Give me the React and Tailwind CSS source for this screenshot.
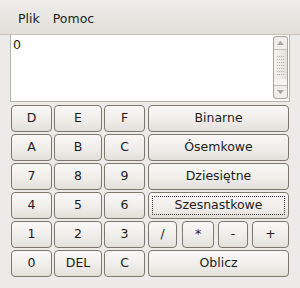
import React from "react";

const F = { fontFamily: '"DejaVu Sans", sans-serif' };

function Btn({ children, className = "", focus = false }) {
  return (
    <div
      className={
        "relative flex h-[27px] items-center justify-center rounded-[4px] border border-[#7d776d] bg-gradient-to-b from-[#f9f8f7] via-[#f1efec] to-[#e3e0db] text-[12.5px] text-[#1c1c1c] " +
        className
      }
    >
      {focus && (
        <div className="pointer-events-none absolute inset-[3px] border border-dotted border-[#3a3a3a]" />
      )}
      <span className="relative">{children}</span>
    </div>
  );
}

function Scrollbar() {
  return (
    <div className="flex h-[63px] w-[15px] flex-col rounded-[3px] border border-[#aaa39a] bg-[#efeeec]">
      <div className="flex h-[13px] items-center justify-center border-b border-[#c5beb5]">
        <svg width="7" height="4" viewBox="0 0 7 4">
          <polygon points="0,4 7,4 3.5,0" fill="#a9a39b" />
        </svg>
      </div>
      <div className="flex flex-1 flex-col border-b border-[#c5beb5] bg-gradient-to-r from-[#f4f3f1] to-[#e4e1dc]">
        <div className="flex flex-1 items-center justify-center">
          <svg width="9" height="20" viewBox="0 0 9 20">
            {[0, 1, 2, 3, 4, 5, 6].map((r) =>
              [0, 1, 2, 3].map((c) => (
                <rect key={r + "-" + c} x={c * 2 + 1} y={r * 3 + 1} width="1" height="1" fill="#b7b0a6" />
              ))
            )}
          </svg>
        </div>
        <div className="h-[6px] bg-[#f7f6f4]" />
      </div>
      <div className="flex h-[12px] items-center justify-center">
        <svg width="7" height="4" viewBox="0 0 7 4">
          <polygon points="0,0 7,0 3.5,4" fill="#a9a39b" />
        </svg>
      </div>
    </div>
  );
}

export default function App() {
  return (
    <div className="h-[288px] w-[300px] bg-[#edebe9]" style={F}>
      <div className="flex h-[35px] items-end gap-[13px] border-b border-[#c8c1b8] bg-gradient-to-b from-[#eeedeb] to-[#e2ded9] pb-[5px] pl-[18px] text-[12.5px] text-[#1c1c1c]">
        <span>Plik</span>
        <span>Pomoc</span>
      </div>
      <div className="px-[10px] pt-0">
        <div className="flex h-[67px] border border-[#b9b2a9] border-t-0 bg-white">
          <div className="flex-1 pl-[2px] pt-[2px] text-[12.5px] leading-[15px] text-[#1c1c1c]">0</div>
          <div className="pr-[1px] pt-[1px]">
            <Scrollbar />
          </div>
        </div>
      </div>
      <div className="flex flex-col gap-[2px] pl-[11px] pt-[3px]">
        <div className="flex">
          <Btn className="w-[41px]">D</Btn>
          <Btn className="ml-[2px] w-[48px]">E</Btn>
          <Btn className="ml-[2px] w-[41px]">F</Btn>
          <Btn className="ml-[3px] w-[141px]">Binarne</Btn>
        </div>
        <div className="flex">
          <Btn className="w-[41px]">A</Btn>
          <Btn className="ml-[2px] w-[48px]">B</Btn>
          <Btn className="ml-[2px] w-[41px]">C</Btn>
          <Btn className="ml-[3px] w-[141px]">Ósemkowe</Btn>
        </div>
        <div className="flex">
          <Btn className="w-[41px]">7</Btn>
          <Btn className="ml-[2px] w-[48px]">8</Btn>
          <Btn className="ml-[2px] w-[41px]">9</Btn>
          <Btn className="ml-[3px] w-[141px]">Dziesiętne</Btn>
        </div>
        <div className="flex">
          <Btn className="w-[41px]">4</Btn>
          <Btn className="ml-[2px] w-[48px]">5</Btn>
          <Btn className="ml-[2px] w-[41px]">6</Btn>
          <Btn className="ml-[3px] w-[141px]" focus>Szesnastkowe</Btn>
        </div>
        <div className="flex">
          <Btn className="w-[41px]">1</Btn>
          <Btn className="ml-[2px] w-[48px]">2</Btn>
          <Btn className="ml-[2px] w-[41px]">3</Btn>
          <Btn className="ml-[3px] w-[29px]">/</Btn>
          <Btn className="ml-[5px] w-[32px]">*</Btn>
          <Btn className="ml-[4px] w-[30px]">-</Btn>
          <Btn className="ml-[4px] w-[37px]">+</Btn>
        </div>
        <div className="flex">
          <Btn className="w-[41px]">0</Btn>
          <Btn className="ml-[2px] w-[48px]">DEL</Btn>
          <Btn className="ml-[2px] w-[41px]">C</Btn>
          <Btn className="ml-[3px] w-[141px]">Oblicz</Btn>
        </div>
      </div>
    </div>
  );
}
